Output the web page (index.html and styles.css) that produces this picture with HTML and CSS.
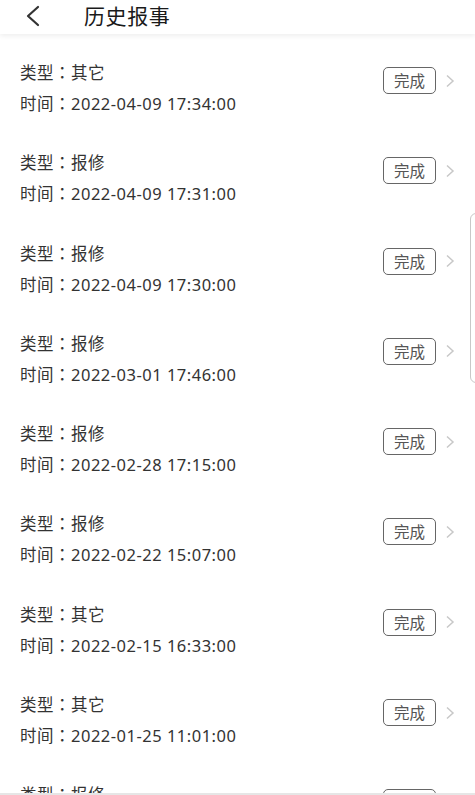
FILE: index.html
```html
<!DOCTYPE html>
<html lang="zh-CN">
<head>
<meta charset="utf-8">
<title>历史报事</title>
<link rel="stylesheet" href="styles.css">
</head>
<body>
<div class="page">
  <header class="topbar">
    <svg class="back" width="20" height="22" viewBox="0 0 20 22"><path d="M15 2 L5 11 L15 20" fill="none" stroke="#333" stroke-width="2.2" stroke-linecap="round" stroke-linejoin="round"/></svg>
    <h1 class="title">历史报事</h1>
  </header>
  <main class="list">
    <div class="item"><div class="info"><div class="line">类型<span class="colon">：</span>其它</div><div class="line">时间<span class="colon">：</span>2022-04-09 17:34:00</div></div><div class="side"><span class="badge">完成</span><svg class="chev" width="10" height="14" viewBox="0 0 10 14"><path d="M2 1.5 L8 7 L2 12.5" fill="none" stroke="#c8c8c8" stroke-width="1.5"/></svg></div></div>
    <div class="item"><div class="info"><div class="line">类型<span class="colon">：</span>报修</div><div class="line">时间<span class="colon">：</span>2022-04-09 17:31:00</div></div><div class="side"><span class="badge">完成</span><svg class="chev" width="10" height="14" viewBox="0 0 10 14"><path d="M2 1.5 L8 7 L2 12.5" fill="none" stroke="#c8c8c8" stroke-width="1.5"/></svg></div></div>
    <div class="item"><div class="info"><div class="line">类型<span class="colon">：</span>报修</div><div class="line">时间<span class="colon">：</span>2022-04-09 17:30:00</div></div><div class="side"><span class="badge">完成</span><svg class="chev" width="10" height="14" viewBox="0 0 10 14"><path d="M2 1.5 L8 7 L2 12.5" fill="none" stroke="#c8c8c8" stroke-width="1.5"/></svg></div></div>
    <div class="item"><div class="info"><div class="line">类型<span class="colon">：</span>报修</div><div class="line">时间<span class="colon">：</span>2022-03-01 17:46:00</div></div><div class="side"><span class="badge">完成</span><svg class="chev" width="10" height="14" viewBox="0 0 10 14"><path d="M2 1.5 L8 7 L2 12.5" fill="none" stroke="#c8c8c8" stroke-width="1.5"/></svg></div></div>
    <div class="item"><div class="info"><div class="line">类型<span class="colon">：</span>报修</div><div class="line">时间<span class="colon">：</span>2022-02-28 17:15:00</div></div><div class="side"><span class="badge">完成</span><svg class="chev" width="10" height="14" viewBox="0 0 10 14"><path d="M2 1.5 L8 7 L2 12.5" fill="none" stroke="#c8c8c8" stroke-width="1.5"/></svg></div></div>
    <div class="item"><div class="info"><div class="line">类型<span class="colon">：</span>报修</div><div class="line">时间<span class="colon">：</span>2022-02-22 15:07:00</div></div><div class="side"><span class="badge">完成</span><svg class="chev" width="10" height="14" viewBox="0 0 10 14"><path d="M2 1.5 L8 7 L2 12.5" fill="none" stroke="#c8c8c8" stroke-width="1.5"/></svg></div></div>
    <div class="item"><div class="info"><div class="line">类型<span class="colon">：</span>其它</div><div class="line">时间<span class="colon">：</span>2022-02-15 16:33:00</div></div><div class="side"><span class="badge">完成</span><svg class="chev" width="10" height="14" viewBox="0 0 10 14"><path d="M2 1.5 L8 7 L2 12.5" fill="none" stroke="#c8c8c8" stroke-width="1.5"/></svg></div></div>
    <div class="item"><div class="info"><div class="line">类型<span class="colon">：</span>其它</div><div class="line">时间<span class="colon">：</span>2022-01-25 11:01:00</div></div><div class="side"><span class="badge">完成</span><svg class="chev" width="10" height="14" viewBox="0 0 10 14"><path d="M2 1.5 L8 7 L2 12.5" fill="none" stroke="#c8c8c8" stroke-width="1.5"/></svg></div></div>
    <div class="item"><div class="info"><div class="line">类型<span class="colon">：</span>报修</div><div class="line">时间<span class="colon">：</span>2022-01-20 10:12:00</div></div><div class="side"><span class="badge">完成</span><svg class="chev" width="10" height="14" viewBox="0 0 10 14"><path d="M2 1.5 L8 7 L2 12.5" fill="none" stroke="#c8c8c8" stroke-width="1.5"/></svg></div></div>
  </main>
  <div class="edge-tab"></div>
  <div class="bottom-line"></div>
</div>
</body>
</html>
```
FILE: styles.css
```css
html, body {
  margin: 0;
  padding: 0;
  background: #fff;
}
body {
  font-family: "Noto Sans", "Noto Sans CJK SC", sans-serif;
  color: #333;
}
.page {
  position: relative;
  width: 475px;
  height: 795px;
  overflow: hidden;
}
.topbar {
  height: 34px;
  display: flex;
  align-items: center;
  background: #fff;
  box-shadow: 0 2px 5px rgba(0, 0, 0, 0.07);
  position: relative;
  z-index: 1;
}
.back {
  margin-left: 23px;
  margin-top: -2px;
}
.title {
  margin: -3px 0 0 41px;
  font-family: "Noto Sans CJK SC", sans-serif;
  font-size: 21px;
  font-weight: 400;
  color: #1a1a1a;
  letter-spacing: 0.6px;
  line-height: 1;
}
.list {
  padding-top: 23px;
}
.item {
  height: 90.3px;
  display: flex;
  justify-content: space-between;
  align-items: flex-start;
  padding-left: 20px;
  box-sizing: border-box;
}
.line {
  font-size: 16.5px;
  line-height: 30px;
  letter-spacing: 0.5px;
  color: #333;
}
.colon {
  font-family: "Noto Sans CJK TC", "Noto Sans CJK SC", sans-serif;
  font-feature-settings: "locl" 0;
}
.side {
  display: flex;
  align-items: center;
  margin-top: 10px;
  margin-right: 20px;
}
.badge {
  box-sizing: border-box;
  width: 53px;
  height: 27px;
  border: 1.5px solid #666;
  border-radius: 5px;
  font-family: "Noto Sans CJK SC", sans-serif;
  font-size: 15.5px;
  line-height: 24px;
  text-align: center;
  color: #555;
}
.chev {
  margin-left: 9px;
}
.edge-tab {
  position: absolute;
  left: 470px;
  top: 213px;
  width: 20px;
  height: 168px;
  border: 1px solid #c8c8c8;
  border-radius: 6px;
  background: #fff;
}
.bottom-line {
  position: absolute;
  left: 0;
  right: 0;
  bottom: 0;
  height: 2px;
  background: #e6e6e6;
}
```
